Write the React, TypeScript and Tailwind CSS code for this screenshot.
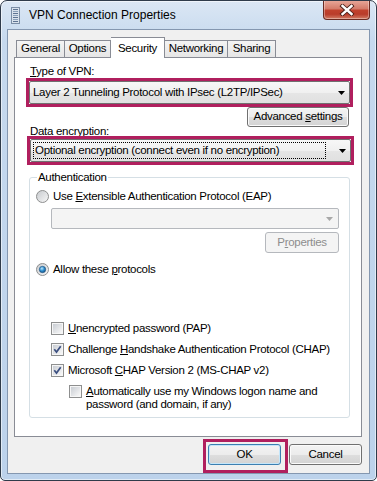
import React from "react";

const Arrow = ({ color = "#000" }: { color?: string }) => (
  <svg width="7" height="4" viewBox="0 0 7 4" className="shrink-0">
    <path d="M0 0H7L3.5 4Z" fill={color} />
  </svg>
);

const CheckBox = ({ checked }: { checked?: boolean }) => (
  <svg width="13" height="13" viewBox="0 0 13 13" className="shrink-0">
    <defs>
      <linearGradient id="cbg" x1="0" y1="0" x2="1" y2="1">
        <stop offset="0" stopColor="#c9cdd3" />
        <stop offset="1" stopColor="#f8f8f8" />
      </linearGradient>
    </defs>
    <rect x="0.5" y="0.5" width="12" height="12" fill="#f6f6f6" stroke="#8e8f8f" />
    <rect x="2" y="2" width="9" height="9" fill="url(#cbg)" />
    {checked && (
      <path d="M3.3 6.3 L5.5 9 L9.7 3.2" fill="none" stroke="#3b4f80" strokeWidth="1.7" />
    )}
  </svg>
);

const Radio = ({ selected }: { selected?: boolean }) => (
  <svg width="13" height="13" viewBox="0 0 13 13" className="shrink-0">
    <defs>
      <linearGradient id="rbg" x1="0" y1="0" x2="1" y2="1">
        <stop offset="0" stopColor="#c6c9cd" />
        <stop offset="1" stopColor="#f8f8f8" />
      </linearGradient>
      <radialGradient id="rdot" cx="0.4" cy="0.35" r="0.75">
        <stop offset="0" stopColor="#bde7fc" />
        <stop offset="0.5" stopColor="#2a8bcd" />
        <stop offset="1" stopColor="#154c7c" />
      </radialGradient>
    </defs>
    <circle cx="6.5" cy="6.5" r="6" fill="url(#rbg)" stroke="#8e8f8f" />
    {selected && (
      <circle cx="6.5" cy="6.5" r="3.2" fill="url(#rdot)" stroke="#1e4d78" strokeWidth="0.6" />
    )}
  </svg>
);

const TitleIcon = () => (
  <svg width="9" height="17" viewBox="0 0 9 17" className="shrink-0">
    <rect x="0.5" y="0.5" width="8" height="16" fill="#d9e2ec" stroke="#7b8ea6" />
    <rect x="2" y="2" width="5" height="1" fill="#5d7391" />
    <rect x="2" y="4" width="5" height="1" fill="#8aa0ba" />
    <rect x="2" y="6" width="5" height="1" fill="#5d7391" />
    <rect x="2" y="8" width="5" height="1" fill="#8aa0ba" />
    <rect x="2" y="10" width="5" height="1" fill="#5d7391" />
    <rect x="2" y="12" width="5" height="1" fill="#8aa0ba" />
    <rect x="2" y="14" width="5" height="1" fill="#5d7391" />
  </svg>
);

const txt = "text-[11.5px] tracking-[-0.3px] text-black";

export default function App() {
  return (
    <div className="w-[377px] h-[481px] flex flex-col rounded-t-[7px] rounded-b-[5px] border border-[#2f3b4a] bg-[linear-gradient(#dbe7f4,#c6d9ee_40px,#bcd2eb)] shadow-[inset_0_0_0_1px_rgba(255,255,255,0.55)] font-['Liberation_Sans',Arial,sans-serif] overflow-hidden">
      {/* title bar */}
      <div className="h-[28px] flex items-start shrink-0">
        <div className="flex items-center h-[28px] pl-[10px] flex-1">
          <TitleIcon />
          <span className="ml-[9px] text-[12px] text-black">VPN Connection Properties</span>
        </div>
        <div className="mt-[-1px] mr-[6px] w-[47px] h-[20px] rounded-b-[4px] border border-t-0 border-[#6a2b22] bg-[linear-gradient(#e9aa9c,#d47c6b_45%,#c0412d_55%,#b93c2a_75%,#d27d66)] shadow-[inset_0_0_0_1px_rgba(255,255,255,0.35)] flex items-center justify-center">
          <svg width="16" height="12" viewBox="0 0 16 12">
            <path d="M3.5 2 L12.5 10 M12.5 2 L3.5 10" stroke="#4a2019" strokeWidth="4.2" strokeLinecap="square" />
            <path d="M3.5 2 L12.5 10 M12.5 2 L3.5 10" stroke="#ffffff" strokeWidth="2.4" strokeLinecap="square" />
          </svg>
        </div>
      </div>

      {/* client area */}
      <div className="mx-[6px] h-[445px] border border-[#8497b0] bg-[#f0f0f0] flex flex-col">
        {/* tabs */}
        <div className={`flex items-end h-[20px] mt-[7px] pl-[8px] ${txt}`}>
          <div className="w-[49px] h-[17px] border border-b-0 border-[#898c95] bg-[linear-gradient(#f4f4f4,#e6e6e6)] flex items-center justify-center">General</div>
          <div className="w-[46px] h-[17px] border border-b-0 border-l-0 border-[#898c95] bg-[linear-gradient(#f4f4f4,#e6e6e6)] flex items-center justify-center">Options</div>
          <div className="relative z-10 w-[54px] h-[21px] mb-[-1px] border border-b-0 border-l-0 border-[#898c95] bg-white flex items-start justify-center pt-[2px]">Security</div>
          <div className="w-[63px] h-[17px] border border-b-0 border-l-0 border-[#898c95] bg-[linear-gradient(#f4f4f4,#e6e6e6)] flex items-center justify-center">Networking</div>
          <div className="w-[48px] h-[17px] border border-b-0 border-l-0 border-[#898c95] bg-[linear-gradient(#f4f4f4,#e6e6e6)] flex items-center justify-center">Sharing</div>
        </div>

        {/* panel */}
        <div className={`ml-[6px] w-[348px] h-[380px] border border-[#898c95] bg-white flex flex-col ${txt}`}>
          <div className="ml-[15px] mt-[6px] h-[14px] leading-[14px]">
            <span className="underline">T</span>ype of VPN:
          </div>
          <div className="ml-[11px] w-[327px] h-[29px] border-[3px] border-[#b01f5e]">
            <div className="h-full flex items-center rounded-[2px] border border-[#707070] bg-[linear-gradient(#f7f7f7,#f0f0f0_50%,#e6e6e6_50%,#e0e0e0)] pl-[3px] pr-[4px]">
              <span className="flex-1">Layer 2 Tunneling Protocol with IPsec (L2TP/IPSec)</span>
              <Arrow />
            </div>
          </div>
          <div className="flex justify-end pr-[12px]">
            <div className="w-[102px] h-[20px] rounded-[3px] border border-[#707070] bg-[linear-gradient(#f3f3f3,#ececec_50%,#dedede_50%,#d3d3d3)] shadow-[inset_0_0_0_1px_#fbfbfb] flex items-center justify-center">
              Advanced&nbsp;<span className="underline">s</span>ettings
            </div>
          </div>
          <div className="ml-[15px] -mt-[3px] h-[14px] leading-[14px]">Data encryption:</div>
          <div className="ml-[12px] -mt-[2px] w-[327px] h-[29px] border-[3px] border-[#b01f5e]">
            <div className="h-full flex items-center rounded-[2px] border border-[#707070] bg-[linear-gradient(#f7f7f7,#f0f0f0_50%,#e6e6e6_50%,#e0e0e0)] pl-[2px] pr-[4px]">
              <div className="flex-1 mr-[13px] h-[17px] border border-dotted border-black flex items-center pl-[1px]">
                Optional encryption (connect even if no encryption)
              </div>
              <Arrow />
            </div>
          </div>

          {/* authentication group */}
          <div className="relative ml-[14px] mt-[12px] w-[321px] h-[241px] border border-[#d5dfe5] rounded-[3px] flex flex-col">
            <div className="absolute left-[7px] top-[-8px] px-[1px] bg-white leading-[14px]">Authentication</div>
            <div className="mt-[11px] ml-[6px] h-[15px] flex items-center gap-[4px]">
              <Radio />
              <span>
                Use <span className="underline">E</span>xtensible Authentication Protocol (EAP)
              </span>
            </div>
            <div className="ml-[21px] mt-[4px] w-[288px] h-[21px] rounded-[2px] border border-[#b5b8bd] bg-[#f4f4f4] flex items-center justify-end pr-[5px]">
              <Arrow color="#a8a8a8" />
            </div>
            <div className="flex justify-end pr-[10px] mt-[3px]">
              <div className="w-[74px] h-[21px] rounded-[3px] border border-[#b5b8bd] bg-[#f4f4f4] text-[#8d8d8d] flex items-center justify-center">
                P<span className="underline">r</span>operties
              </div>
            </div>
            <div className="mt-[9px] ml-[6px] h-[15px] flex items-center gap-[4px]">
              <Radio selected />
              <span>
                Allow these <span className="underline">p</span>rotocols
              </span>
            </div>
            <div className="mt-[44px] ml-[21px] h-[15px] flex items-center gap-[4px]">
              <CheckBox />
              <span>
                <span className="underline">U</span>nencrypted password (PAP)
              </span>
            </div>
            <div className="mt-[6px] ml-[21px] h-[15px] flex items-center gap-[4px]">
              <CheckBox checked />
              <span>
                Challenge <span className="underline">H</span>andshake Authentication Protocol (CHAP)
              </span>
            </div>
            <div className="mt-[6px] ml-[21px] h-[15px] flex items-center gap-[4px]">
              <CheckBox checked />
              <span>
                Microsoft <span className="underline">C</span>HAP Version 2 (MS-CHAP v2)
              </span>
            </div>
            <div className="mt-[7px] ml-[39px] flex items-start gap-[4px] leading-[13px]">
              <CheckBox />
              <span>
                <span className="underline">A</span>utomatically use my Windows logon name and
                <br />
                password (and domain, if any)
              </span>
            </div>
          </div>
        </div>

        {/* buttons */}
        <div className={`flex justify-end items-start mt-[2px] pr-[7px] ${txt}`}>
          <div className="w-[85px] h-[34px] border-[3px] border-[#b01f5e] pt-[2px] pl-[2px]">
            <div className="w-[73px] h-[21px] rounded-[3px] border border-[#3c7fb1] bg-[linear-gradient(#f3f3f3,#ececec_50%,#dedede_50%,#d3d3d3)] shadow-[inset_0_0_0_1px_#c4e6fa] flex items-center justify-center">
              OK
            </div>
          </div>
          <div className="ml-[1px] mt-[5px] w-[73px] h-[21px] rounded-[3px] border border-[#707070] bg-[linear-gradient(#f3f3f3,#ececec_50%,#dedede_50%,#d3d3d3)] shadow-[inset_0_0_0_1px_#fbfbfb] flex items-center justify-center">
            Cancel
          </div>
        </div>
      </div>
    </div>
  );
}
